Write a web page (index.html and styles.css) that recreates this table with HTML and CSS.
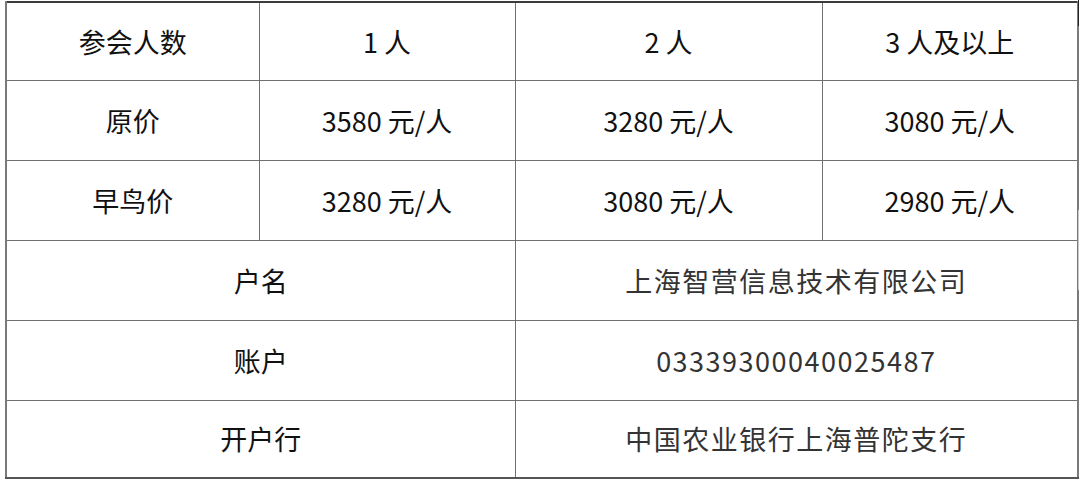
FILE: index.html
```html
<!DOCTYPE html>
<html lang="zh-CN">
<head>
<meta charset="utf-8">
<link rel="stylesheet" href="styles.css">
</head>
<body>
<div class="page">
  <table class="fees">
    <colgroup>
      <col class="c1"><col class="c2"><col class="c3"><col class="c4">
    </colgroup>
    <tr class="r1"><td>参会人数</td><td>1 人</td><td>2 人</td><td>3 人及以上</td></tr>
    <tr><td>原价</td><td>3580 元/人</td><td>3280 元/人</td><td>3080 元/人</td></tr>
    <tr><td>早鸟价</td><td>3280 元/人</td><td>3080 元/人</td><td>2980 元/人</td></tr>
    <tr><td colspan="2">户名</td><td colspan="2" class="val">上海智营信息技术有限公司</td></tr>
    <tr><td colspan="2">账户</td><td colspan="2" class="val">03339300040025487</td></tr>
    <tr class="last"><td colspan="2">开户行</td><td colspan="2" class="val">中国农业银行上海普陀支行</td></tr>
  </table>
  <span class="edge edge-top"></span>
  <span class="edge edge-mid"></span>
</div>
</body>
</html>
```
FILE: styles.css
```css
html, body {
  margin: 0;
  padding: 0;
  background: #ffffff;
}
body {
  width: 1080px;
  height: 481px;
  overflow: hidden;
  font-family: "Noto Sans CJK SC", "Noto Sans", sans-serif;
}
.page {
  position: relative;
  padding: 1px 0 0 5px;
}
.fees {
  border-collapse: collapse;
  table-layout: fixed;
  width: 1072px;
  border-top: 2px solid #3c3c3c;
}
.c1 { width: 253px; }
.c2 { width: 256px; }
.c3 { width: 307px; }
.c4 { width: 256px; }
.fees td {
  border: 1px solid #707070;
  height: 79px;
  padding: 0;
  text-align: center;
  vertical-align: middle;
  font-size: 27px;
  line-height: 30px;
  color: #111111;
}
.fees tr.r1 td { height: 77px; }
.fees tr.last td { height: 76px; border-bottom: 2px solid #555555; }
.fees td:first-child { border-left: 2px solid #7a7a7a; }
.fees td:last-child { border-right: 2px solid #7a7a7a; }
.fees td.val {
  color: #333333;
  letter-spacing: 1.5px;
}
.edge {
  position: absolute;
  left: 1078px;
  width: 1px;
}
.edge-top { top: 0; height: 26px; background: #222222; }
.edge-mid { top: 210px; height: 80px; background: #c8c8c8; }
```
